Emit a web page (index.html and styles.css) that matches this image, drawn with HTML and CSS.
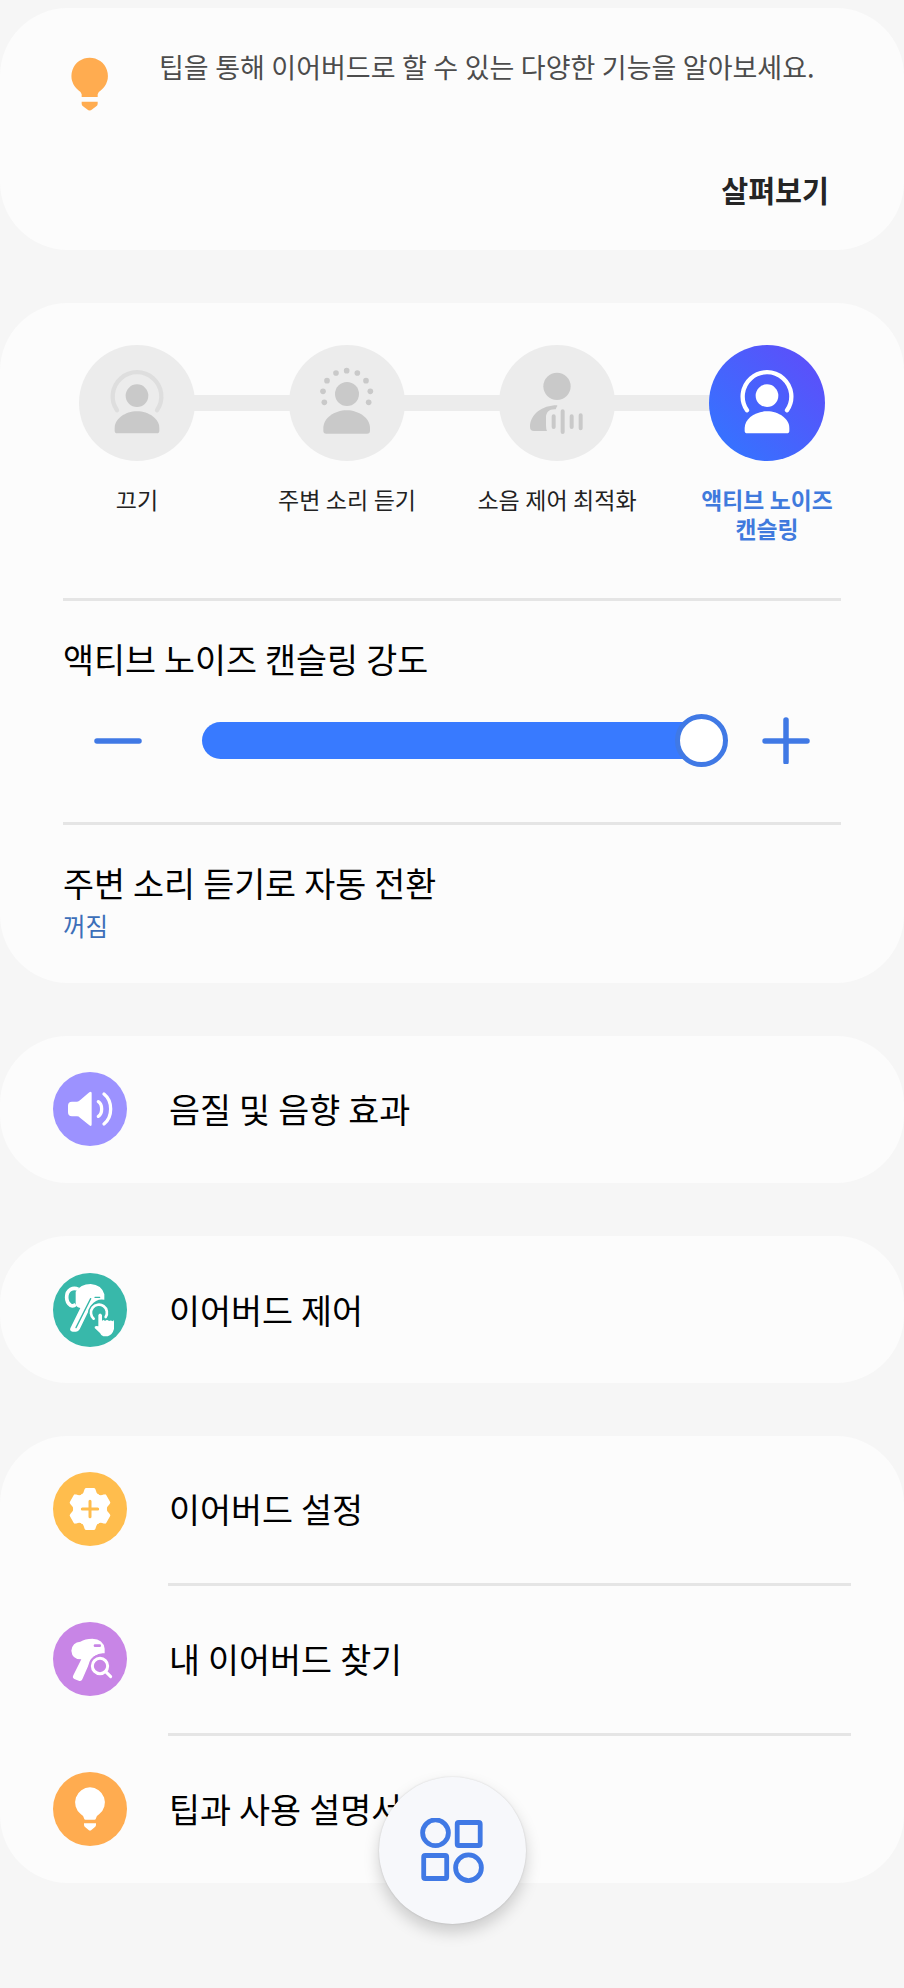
FILE: index.html
```html
<!DOCTYPE html>
<html lang="ko">
<head>
<meta charset="utf-8">
<title>이어버드</title>
<link rel="stylesheet" href="styles.css">
</head>
<body>
<main class="screen">
  <section class="card tip">
    <svg class="tip-icon" viewBox="0 0 114 162">
      <path d="M56 2A55 55 0 0 0 22 100Q32 106 32 112V120H80V112Q80 106 90 100A55 55 0 0 0 56 2Z"/>
      <path d="M32 134H80V141Q80 146 74 149L64 157Q56 164 48 157L38 149Q32 146 32 141Z"/>
    </svg>
    <p class="tip-text">팁을 통해 이어버드로 할 수 있는 다양한 기능을 알아보세요.</p>
    <button class="tip-action">살펴보기</button>
  </section>

  <section class="card noise">
    <div class="modes">
      <div class="mode">
        <svg class="mode-icon" viewBox="0 0 348 348">
          <path class="arc" d="M114 196A73 73 0 1 1 234 196"/>
          <circle cx="174" cy="152" r="34"/>
          <path d="M107 257V249C107 222 138 199 174 199S241 222 241 249V257Q241 265 233 265H115Q107 265 107 257Z"/>
        </svg>
        <span class="mode-label">끄기</span>
      </div>
      <div class="mode">
        <svg class="mode-icon" viewBox="0 0 348 348">
          <circle cx="173" cy="77" r="8.5"/><circle cx="141" cy="84" r="8.5"/><circle cx="205" cy="84" r="8.5"/>
          <circle cx="114" cy="107" r="8.5"/><circle cx="231" cy="107" r="8.5"/><circle cx="102" cy="139" r="8.5"/>
          <circle cx="244" cy="139" r="8.5"/><circle cx="106" cy="172" r="8.5"/><circle cx="239" cy="172" r="8.5"/>
          <circle cx="174" cy="147" r="36"/>
          <path d="M103 257V249C103 220 136 196 173 196S243 220 243 249V257Q243 266 234 266H112Q103 266 103 257Z"/>
        </svg>
        <span class="mode-label">주변 소리 듣기</span>
      </div>
      <div class="mode">
        <svg class="mode-icon" viewBox="0 0 348 348">
          <circle cx="174" cy="124" r="41"/>
          <path d="M93 246C93 208 130 181 174 181Q177 183 173 186L170 193C150 192 141 202 141 218V240Q141 252 144 258H105Q93 258 93 246Z"/>
          <path class="bars" d="M164 214V246M191 199V261M218 214V246M245 211V250"/>
        </svg>
        <span class="mode-label">소음 제어 최적화</span>
      </div>
      <div class="mode mode-active">
        <svg class="mode-icon" viewBox="0 0 348 348">
          <path class="arc" d="M114 196A73 73 0 1 1 234 196"/>
          <circle cx="174" cy="152" r="34"/>
          <path d="M107 257V249C107 222 138 199 174 199S241 222 241 249V257Q241 265 233 265H115Q107 265 107 257Z"/>
        </svg>
        <span class="mode-label">액티브 노이즈<br>캔슬링</span>
      </div>
    </div>

    <div class="strength">
      <h2 class="title">액티브 노이즈 캔슬링 강도</h2>
      <div class="slider-row">
        <svg class="step" viewBox="0 0 48 48"><path d="M3 25H45"/></svg>
        <div class="slider"><div class="track"></div><div class="thumb"></div></div>
        <svg class="step" viewBox="0 0 48 48"><path d="M3 25H45M24 4V46"/></svg>
      </div>
    </div>

    <div class="auto">
      <h2 class="title">주변 소리 듣기로 자동 전환</h2>
      <p class="status">꺼짐</p>
    </div>
  </section>

  <section class="card">
    <div class="row">
      <svg class="row-icon violet" viewBox="0 0 222 222">
        <path d="M45 101Q45 89 57 89H72Q77 89 81 85L109 61Q116 56 116 64V157Q116 165 109 160L81 137Q77 133 72 133H57Q45 133 45 121Z"/>
        <path class="line" d="M136 89Q146 95 146 111T136 133M153 66Q173 82 173 111T153 156"/>
      </svg>
      <span class="row-label">음질 및 음향 효과</span>
    </div>
  </section>

  <section class="card">
    <div class="row row-low">
      <svg class="row-icon teal" viewBox="0 0 222 222">
        <path class="loop" d="M76 49Q64 43 53 49Q41 56 41 73T53 97Q61 101 68 94"/>
        <path d="M68 94V56Q82 34 113 33Q146 35 154 64V80Q130 76 115 97L80 169Q76 176 69 176H59Q49 175 52 166L82 105Q70 103 68 94Z"/>
        <path class="cut" d="M113 77L69 164M126 73H140"/>
        <path class="halo" d="M122 137A24 24 0 1 1 158 132"/>
        <path class="touch" d="M122 137A24 24 0 1 1 158 132"/>
        <path class="halo-fill" d="M133 122Q141 112 151 122V139L180 138Q188 140 187 150V172Q182 192 164 194H151Q142 193 138 184L118 162Q122 151 133 155Z"/>
        <path d="M136 126Q141 117 147 126V144Q151 138 156 144Q162 138 168 144Q174 140 179 145Q183 137 183 149V168Q178 186 164 190H151Q145 189 141 180L125 165Q123 157 136 160Z"/>
      </svg>
      <span class="row-label">이어버드 제어</span>
    </div>
  </section>

  <section class="card">
    <div class="row">
      <svg class="row-icon amber" viewBox="0 0 222 222">
        <defs><path id="tooth" d="M85 68Q92 65 94 54L95 51Q96 48 100 48H122Q126 48 127 51L128 54Q130 65 137 68L111 100Z"/></defs>
        <circle cx="111" cy="111" r="50"/>
        <use href="#tooth"/><use href="#tooth" transform="rotate(60 111 111)"/><use href="#tooth" transform="rotate(120 111 111)"/>
        <use href="#tooth" transform="rotate(180 111 111)"/><use href="#tooth" transform="rotate(240 111 111)"/><use href="#tooth" transform="rotate(300 111 111)"/>
        <path class="cut plus" d="M111 88V134M88 111H134"/>
      </svg>
      <span class="row-label">이어버드 설정</span>
    </div>
    <div class="row">
      <svg class="row-icon orchid" viewBox="0 0 222 222">
        <path d="M82 59Q96 50 118 50Q151 51 155 80V94Q124 90 108 126L88 172Q85 179 77 176L64 171Q57 168 61 160L85 112Q57 112 55 86Q58 60 82 59Z"/>
        <path class="cut slot" d="M126 71H140"/>
        <circle class="disc" cx="141" cy="132" r="34"/>
        <circle class="lens" cx="141" cy="132" r="23"/>
        <path class="lens" d="M158 149L173 164"/>
      </svg>
      <span class="row-label">내 이어버드 찾기</span>
    </div>
    <div class="row">
      <svg class="row-icon orange" viewBox="0 0 222 222">
        <path d="M111 46A45 45 0 0 0 83 126Q93 132 93 139Q93 143 97 143H125Q129 143 129 139Q129 132 139 126A45 45 0 0 0 111 46Z"/>
        <path d="M93 154H129V159Q129 163 125 166L116 173Q111 178 106 173L97 166Q93 163 93 159Z"/>
      </svg>
      <span class="row-label">팁과 사용 설명서</span>
    </div>
  </section>

  <button class="fab" aria-label="메뉴">
    <svg class="fab-icon" viewBox="0 0 66 66">
      <circle cx="15.500" cy="14.800" r="12.900"/>
      <rect x="37.200" y="4.500" width="23" height="23" rx="1.500"/>
      <rect x="3.700" y="37.500" width="23" height="23" rx="1.500"/>
      <circle cx="48.500" cy="49.700" r="12.900"/>
    </svg>
  </button>
</main>
</body>
</html>
```
FILE: styles.css
```css
* { box-sizing: border-box; }

body {
  margin: 0;
  background: #f6f6f6;
  font-family: "Noto Sans CJK KR", "Noto Sans", sans-serif;
  color: #000;
}

h2, p { margin: 0; font-weight: 400; }

button { border: 0; background: none; padding: 0; font-family: inherit; }

svg { display: block; flex: none; }

.tip-text, .title, .row-label, .mode-label { word-spacing: -.04em; }

.screen {
  position: relative;
  display: flex;
  flex-direction: column;
  gap: 53px;
  height: 1988px;
  padding-top: 8px;
  overflow: hidden;
}

.card {
  flex: none;
  background: #fcfcfc;
  border-radius: 68px;
}

/* Tip banner */
.tip {
  display: grid;
  grid-template-columns: 38px 1fr;
  grid-template-rows: 103px auto;
  column-gap: 50px;
  height: 242px;
  padding: 39px 75px 0 71px;
}

.tip-icon { width: 38px; height: 54px; margin-top: 10px; fill: #ffac50; }

.tip-text {
  font-size: 27px;
  line-height: 40px;
  white-space: nowrap;
  color: #4c4c4c;
}

.tip-action {
  grid-column: 2;
  justify-self: end;
  align-self: start;
  margin-top: 17px;
  font-size: 29.300px;
  font-weight: 700;
  line-height: 44px;
  color: #252525;
}

/* Noise control */
.modes {
  display: grid;
  grid-template-columns: repeat(4, 210px);
  height: 295px;
  padding: 42px 32px 0;
  background: linear-gradient(#ececec, #ececec) 137px 92px / 630px 16px no-repeat;
}

.mode { display: flex; flex-direction: column; align-items: center; gap: 24px; }

.mode-icon {
  width: 116px;
  height: 116px;
  border-radius: 50%;
  background: #ececec;
  fill: #c9c9c9;
}

.arc { fill: none; stroke: #dedede; stroke-width: 13; stroke-linecap: round; }

.bars { fill: none; stroke: #c9c9c9; stroke-width: 12; stroke-linecap: round; }

.mode-label {
  font-size: 23px;
  line-height: 29px;
  text-align: center;
  white-space: nowrap;
  color: #222;
}

.mode-active .mode-icon {
  background: linear-gradient(45deg, #3771ff 15%, #5b50fa 88%);
  fill: #fff;
}

.mode-active .arc { stroke: #fff; }

.mode-active .mode-label { font-size: 22.800px; font-weight: 700; color: #407add; }

.strength, .auto {
  margin: 0 63px;
  border-top: 3px solid #e5e5e5;
}

.strength { height: 224px; padding-top: 34px; }

.auto { height: 161px; padding-top: 34px; }

.title { font-size: 33.700px; line-height: 48px; }

.slider-row {
  display: flex;
  align-items: center;
  height: 54px;
  margin: 30px 31px 0;
}

.step {
  width: 48px;
  height: 48px;
  fill: none;
  stroke: #4079e5;
  stroke-width: 5.500;
  stroke-linecap: round;
}

.slider {
  display: grid;
  align-items: center;
  width: 526px;
  margin: 0 34px 0 60px;
}

.track, .thumb { grid-area: 1 / 1; }

.track { height: 37px; margin-right: 20px; border-radius: 19px; background: #387aff; }

.thumb {
  justify-self: end;
  width: 53px;
  height: 53px;
  border: 5px solid #4079e5;
  border-radius: 50%;
  background: #fff;
}

.status { margin-top: 3px; font-size: 24.500px; line-height: 32px; color: #3d6fb9; }

/* Menu rows */
.row {
  position: relative;
  display: flex;
  align-items: center;
  gap: 42px;
  height: 147px;
  padding: 0 0 1px 53px;
}

.row-low { padding-bottom: 0; }

.row + .row { margin-top: 3px; }

.row + .row::before {
  content: "";
  position: absolute;
  top: -3px;
  left: 168px;
  right: 53px;
  height: 3px;
  background: #e5e5e5;
}

.row-icon { width: 74px; height: 74px; border-radius: 50%; background: var(--tone); fill: #fff; }

.row-label { font-size: 33.700px; line-height: 48px; white-space: nowrap; }

.violet { --tone: #9c92ff; }
.teal { --tone: #38b8aa; }
.amber { --tone: #ffbd4d; }
.orchid { --tone: #c885e6; }
.orange { --tone: #ffac50; }

.line { fill: none; stroke: #fff; stroke-width: 10; stroke-linecap: round; }
.loop { fill: none; stroke: #fff; stroke-width: 11; }
.cut { fill: none; stroke: var(--tone); stroke-width: 4; stroke-linecap: round; }
.plus { stroke-width: 9; }
.slot { stroke-width: 8; }
.halo { fill: none; stroke: var(--tone); stroke-width: 17; }
.touch { fill: none; stroke: #fff; stroke-width: 8; stroke-linecap: round; }
.halo-fill, .disc { fill: var(--tone); }
.lens { fill: none; stroke: #fff; stroke-width: 9; stroke-linecap: round; }

/* Floating menu button */
.fab {
  position: absolute;
  left: 379px;
  top: 1777px;
  display: grid;
  place-items: center;
  width: 147px;
  height: 147px;
  border-radius: 50%;
  background: #f7f8fb;
  box-shadow: 0 0 2px rgba(0, 0, 0, .14), 0 8px 16px rgba(0, 0, 0, .18);
}

.fab-icon { width: 66px; height: 66px; fill: none; stroke: #4079e5; stroke-width: 4.800; }
```
